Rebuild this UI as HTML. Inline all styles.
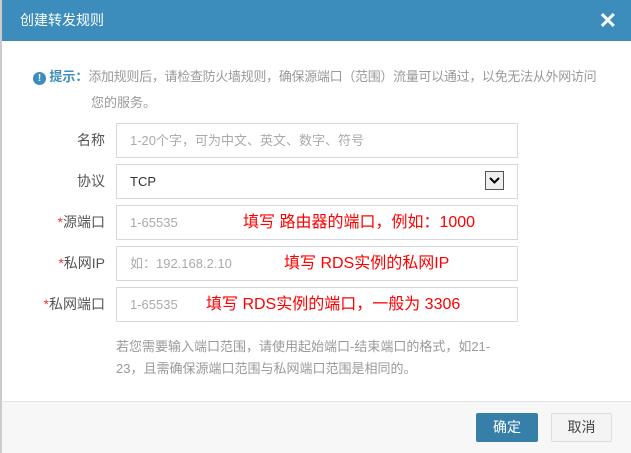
<!DOCTYPE html>
<html><head><meta charset="utf-8"><style>
*{margin:0;padding:0;box-sizing:border-box}
body{width:631px;height:453px;overflow:hidden;background:#fff;font-family:"Liberation Sans","Noto Sans CJK SC",sans-serif;position:relative}
.strip{position:absolute;left:0;top:0;width:2px;height:453px;background:#ccc}
.hdr{position:absolute;left:2px;top:0;width:629px;height:41px;background:#3c8dbc;color:#fff;font-size:14px;line-height:41px;padding-left:18px}
.x{position:absolute;right:14px;top:0;font-size:22px;font-weight:bold;line-height:41px}
.tip{position:absolute;left:33px;top:64px;font-size:13px;color:#999;line-height:25px;white-space:nowrap;letter-spacing:-0.3px}
.tip2{position:absolute;left:91px;top:90px;font-size:13px;color:#999;line-height:25px;white-space:nowrap}
.tip b{color:#3c8dbc;letter-spacing:0}
.ic{display:inline-block;width:13px;height:13px;border-radius:50%;background:#3c8dbc;color:#fff;font-size:10px;text-align:center;line-height:13px;font-weight:bold;vertical-align:0;letter-spacing:0}
.lab{position:absolute;right:526px;font-size:14px;color:#555;line-height:35px;white-space:nowrap}
.lab i{color:#e4393c;font-style:normal}
.inp{position:absolute;left:116px;width:402px;height:35px;border:1px solid #d5d8de;font-size:13px;color:#aaa;line-height:33px;padding-left:13px}
.red{position:absolute;color:#f00;font-size:16px;line-height:35px;white-space:nowrap}
.sel{position:absolute;left:485px;top:171px;width:19px;height:19px;border:1px solid #555;background:#eee}
.note{position:absolute;left:116px;top:336px;width:380px;font-size:13px;color:#999;line-height:22px}
.ft{position:absolute;left:2px;top:401px;width:629px;height:52px;background:#f7f7f7;border-top:1px solid #e5e5e5}
.b1{position:absolute;left:476px;top:413px;width:62px;height:29px;background:#367fa9;color:#fff;font-size:14px;text-align:center;line-height:29px;border-radius:2px}
.b2{position:absolute;left:551px;top:413px;width:61px;height:29px;background:#f4f4f4;border:1px solid #ddd;color:#444;font-size:14px;text-align:center;line-height:27px;border-radius:2px}
</style></head><body>
<div class="strip"></div>
<div class="hdr">创建转发规则<span class="x">✕</span></div>
<div class="tip"><span class="ic">!</span> <b>提示：</b>添加规则后，请检查防火墙规则，确保源端口（范围）流量可以通过，以免无法从外网访问</div>
<div class="tip2">您的服务。</div>
<div class="lab" style="top:123px">名称</div><div class="inp" style="top:123px">1-20个字，可为中文、英文、数字、符号</div>
<div class="lab" style="top:164px">协议</div><div class="inp" style="top:164px;color:#333">TCP</div>
<div class="sel"><svg width="17" height="17" viewBox="0 0 17 17"><path d="M4 6l4.5 4.5L13 6" stroke="#000" stroke-width="2" fill="none"/></svg></div>
<div class="lab" style="top:205px"><i>*</i>源端口</div><div class="inp" style="top:205px">1-65535</div>
<div class="red" style="left:243px;top:205px">填写 路由器的端口，例如：1000</div>
<div class="lab" style="top:246px"><i>*</i>私网IP</div><div class="inp" style="top:246px">如：192.168.2.10</div>
<div class="red" style="left:284px;top:246px">填写 RDS实例的私网IP</div>
<div class="lab" style="top:287px"><i>*</i>私网端口</div><div class="inp" style="top:287px">1-65535</div>
<div class="red" style="left:206px;top:287px">填写 RDS实例的端口，一般为 3306</div>
<div class="note">若您需要输入端口范围，请使用起始端口-结束端口的格式，如21-23，且需确保源端口范围与私网端口范围是相同的。</div>
<div class="ft"></div>
<div class="b1">确定</div><div class="b2">取消</div>
</body></html>
